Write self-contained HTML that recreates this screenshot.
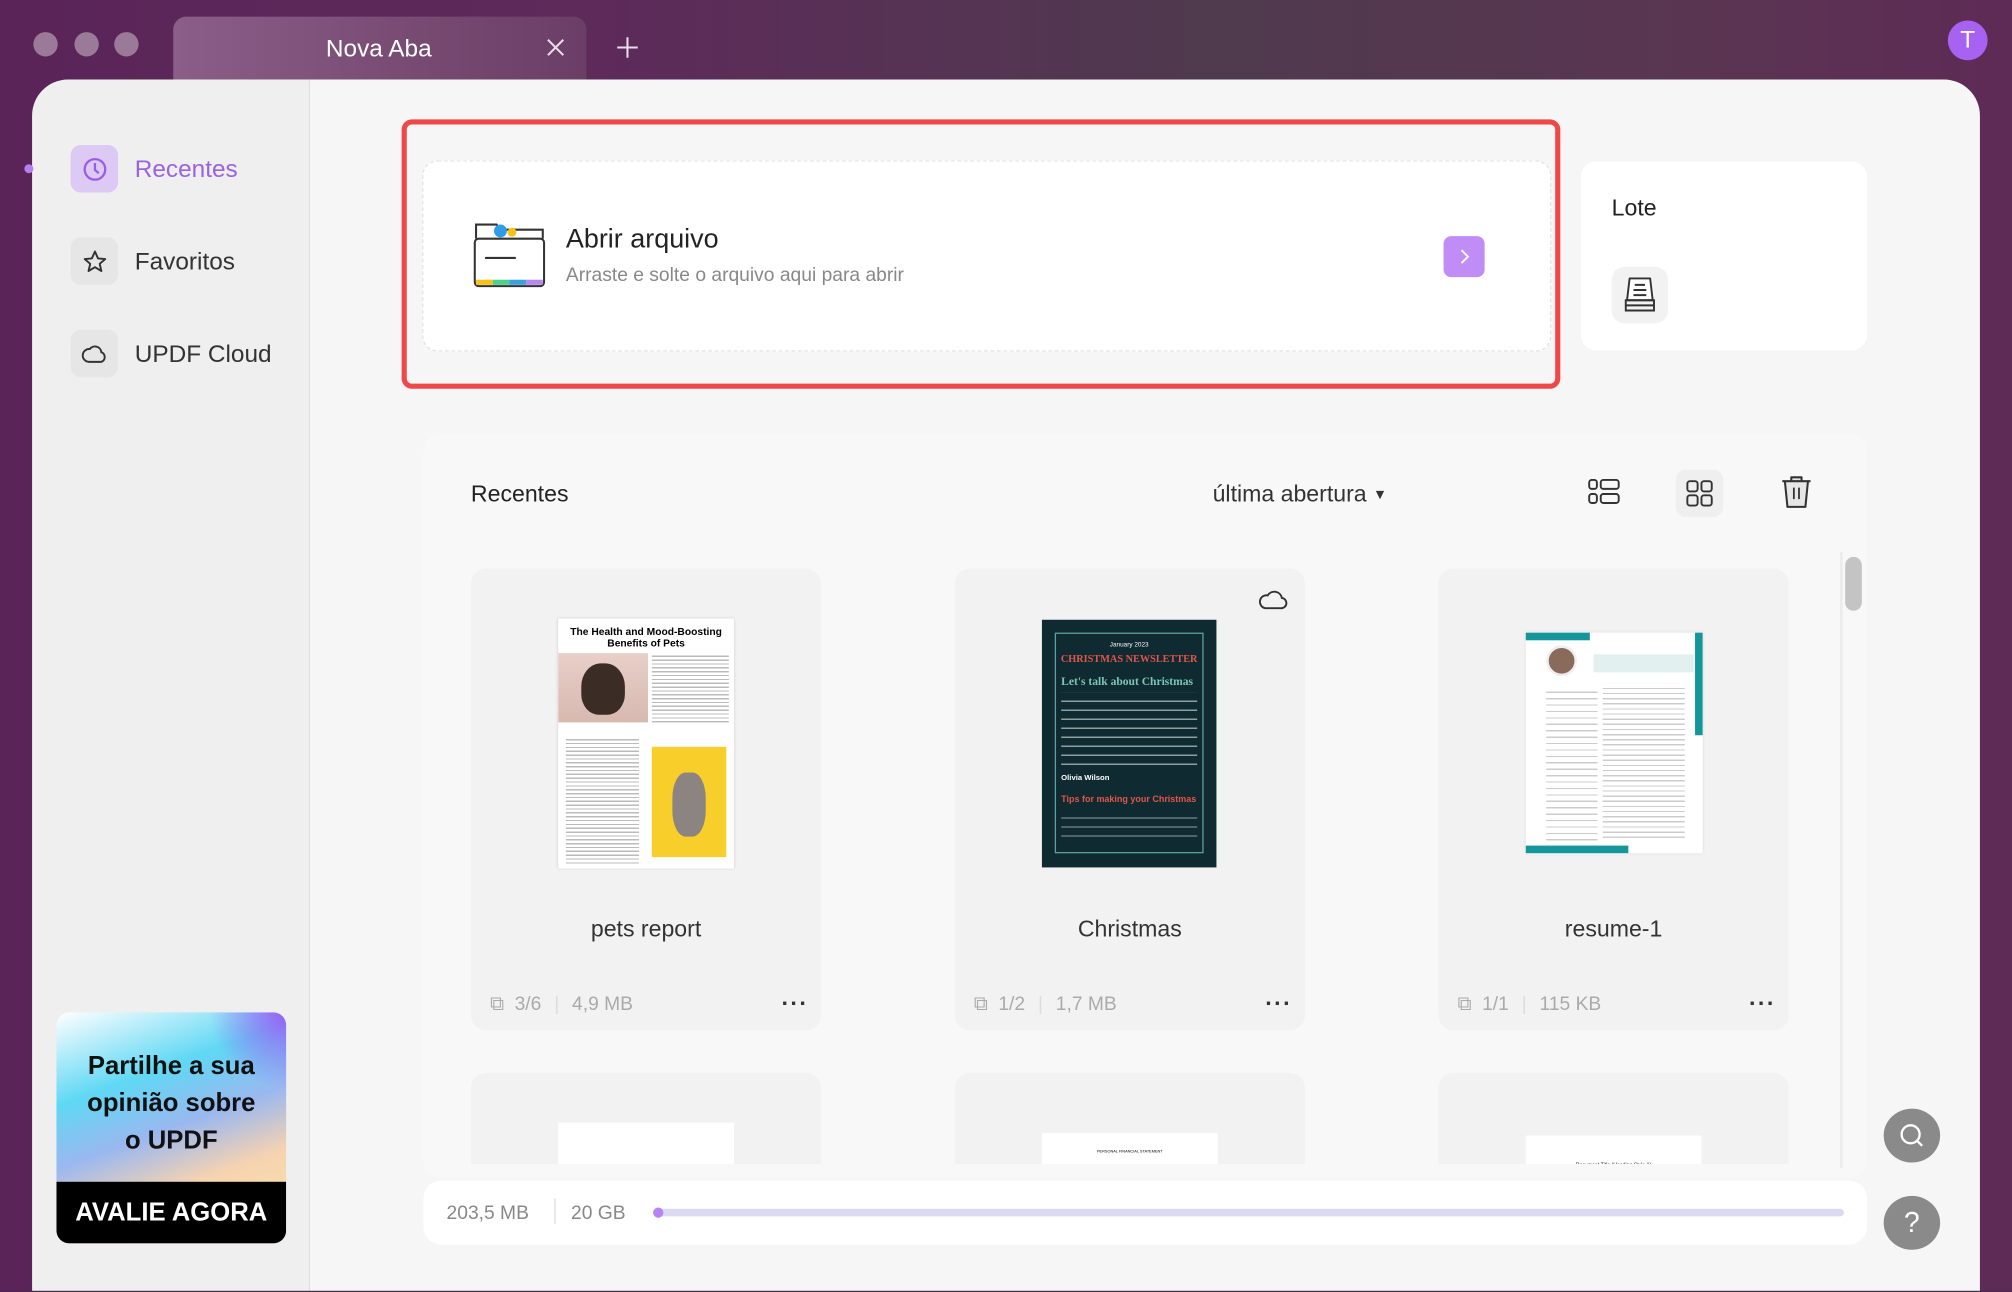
<!DOCTYPE html>
<html><head><meta charset="utf-8"><style>
*{box-sizing:border-box;margin:0;padding:0}
html,body{width:2012px;height:1292px;overflow:hidden;background:#4a2a4e}
#s{position:absolute;left:0;top:0;width:1568px;height:1006px;transform:scale(1.28316);transform-origin:0 0;font-family:"Liberation Sans",sans-serif;background:linear-gradient(90deg,#5a2458 0%,#5d2a5a 30%,#4f3a4e 60%,#5a3552 85%,#5e2a56 100%);overflow:hidden}
.a{position:absolute}
.tl{width:19px;height:19px;border-radius:50%;background:#9a7a98;top:25px}
.side{left:25px;top:62px;width:216px;height:944px;background:#efefef;border-radius:28px 0 0 0}
.main{left:241px;top:62px;width:1302px;height:944px;background:#f6f6f6;border-radius:0 28px 0 0}
.ib{width:37px;height:37px;border-radius:8px;background:#e6e6e6;display:flex;align-items:center;justify-content:center}
.sl{font-size:19px;color:#333}
.card{background:#f2f2f2;border-radius:12px;width:273px;height:360px}
.nm{font-size:18px;color:#333;width:273px;text-align:center}
.meta{font-size:15px;color:#aaa;display:flex;align-items:center}
.dots{font-size:18px;color:#333;letter-spacing:1px;font-weight:bold}
</style></head><body><div id="s">
<div class="a tl" style="left:26px"></div><div class="a tl" style="left:58px"></div><div class="a tl" style="left:89px"></div>
<div class="a" style="left:135px;top:13px;width:322px;height:52px;border-radius:10px 10px 0 0;background:linear-gradient(90deg,#8a5e88,#774a72 60%,#6a3e66)"></div>
<div class="a" style="left:254px;top:28px;font-size:19px;color:#fff">Nova Aba</div>
<svg class="a" style="left:426px;top:30px" width="14" height="14"><path d="M1 1L13 13M13 1L1 13" stroke="#e8dde8" stroke-width="1.6"/></svg>
<svg class="a" style="left:480px;top:28px" width="18" height="18"><path d="M9 1V17M1 9H17" stroke="#e8dde8" stroke-width="1.6"/></svg>
<div class="a" style="left:1518px;top:16px;width:31px;height:31px;border-radius:50%;background:#a862f2;color:#fff;font-size:19px;text-align:center;line-height:31px">T</div>

<div class="a side"></div><div class="a main"></div>
<div class="a" style="left:19px;top:128px;width:7px;height:7px;border-radius:50%;background:#b77ef0"></div>
<div class="a ib" style="left:55px;top:113px;background:#dccaf5"><svg width="20" height="20"><circle cx="10" cy="10" r="8" fill="none" stroke="#9b5de5" stroke-width="1.8"/><path d="M10 5V10.5L13 13" fill="none" stroke="#9b5de5" stroke-width="1.8"/></svg></div>
<div class="a sl" style="left:105px;top:122px;color:#9a63e0">Recentes</div>
<div class="a ib" style="left:55px;top:185px"><svg width="20" height="20"><path d="M10 2L12.4 7.4L18 7.9L13.7 11.6L15 17.2L10 14.2L5 17.2L6.3 11.6L2 7.9L7.6 7.4Z" fill="none" stroke="#333" stroke-width="1.5" stroke-linejoin="round"/></svg></div>
<div class="a sl" style="left:105px;top:194px">Favoritos</div>
<div class="a ib" style="left:55px;top:257px"><svg width="22" height="20"><path d="M6 16H16A4 4 0 0 0 16 8.5A5 5 0 0 0 7 6A4.5 4.5 0 0 0 6 16Z" fill="none" stroke="#333" stroke-width="1.5"/></svg></div>
<div class="a sl" style="left:105px;top:266px">UPDF Cloud</div>

<div class="a" style="left:44px;top:789px;width:179px;height:180px;border-radius:10px;overflow:hidden;background:linear-gradient(160deg,#fff 0%,#5fd8f4 30%,#9ab8f0 50%,#f6d3b0 70%,#fbe6a8 100%)">
<div class="a" style="right:0;top:0;width:60px;height:60px;background:radial-gradient(circle at 100% 0,#9a5ef5,transparent 70%)"></div>
<div class="a" style="left:0;top:28px;width:179px;text-align:center;font-weight:bold;font-size:20px;line-height:29px;color:#111">Partilhe a sua<br>opinião sobre<br>o UPDF</div>
<div class="a" style="left:0;top:132px;width:179px;height:48px;background:#000;color:#fff;font-weight:bold;font-size:20px;text-align:center;line-height:48px">AVALIE AGORA</div></div>

<div class="a" style="left:313px;top:93px;width:903px;height:210px;border:4px solid #ee4848;border-radius:8px"></div>
<div class="a" style="left:329px;top:125px;width:880px;height:149px;background:#fff;border:1px dashed #e4e4e4;border-radius:12px"></div>
<svg class="a" style="left:368px;top:170px" width="58" height="56"><path d="M3 16V5H19L22 9H55V16" fill="none" stroke="#333" stroke-width="1.6"/><circle cx="22" cy="10" r="5" fill="#2f9ce8"/><circle cx="31" cy="11" r="3.5" fill="#f6c21a"/><rect x="2" y="16" width="54" height="37" rx="3" fill="#fff" stroke="#333" stroke-width="1.6"/><path d="M10 31H34" stroke="#333" stroke-width="1.6"/><rect x="3" y="48" width="13" height="4" fill="#f6c21a"/><rect x="16" y="48" width="13" height="4" fill="#4cd08a"/><rect x="29" y="48" width="13" height="4" fill="#3aa0e0"/><rect x="42" y="48" width="13" height="4" fill="#b886f2"/></svg>
<div class="a" style="left:441px;top:175px;font-size:21px;color:#222">Abrir arquivo</div>
<div class="a" style="left:441px;top:206px;font-size:15px;color:#888">Arraste e solte o arquivo aqui para abrir</div>
<div class="a" style="left:1125px;top:184px;width:32px;height:32px;border-radius:6px;background:#c08cf5"><svg width="32" height="32"><path d="M14 11L19 16L14 21" fill="none" stroke="#fff" stroke-width="1.5"/></svg></div>
<div class="a" style="left:1232px;top:126px;width:223px;height:147px;background:#fff;border-radius:12px"></div>
<div class="a" style="left:1256px;top:152px;font-size:18px;color:#222">Lote</div>
<div class="a ib" style="left:1256px;top:208px;width:44px;height:44px;border-radius:10px;background:#f2f2f2"><svg width="30" height="32"><path d="M7 3H23L25 20H5Z" fill="#fff" stroke="#333" stroke-width="1.5" stroke-linejoin="round"/><path d="M11 8H19M10 12H20M10 16H20" stroke="#333" stroke-width="1.5"/><path d="M4 20H26V24H4ZM4 24H26V28H4Z" fill="none" stroke="#333" stroke-width="1.5"/></svg></div>

<div class="a" style="left:330px;top:338px;width:1125px;height:580px;background:#f8f8f8;border-radius:14px"></div>
<div class="a" style="left:367px;top:375px;font-size:18px;color:#222">Recentes</div>
<div class="a" style="left:945px;top:375px;font-size:18px;color:#333">última abertura <span style="font-size:11px;vertical-align:2px">▼</span></div>
<svg class="a" style="left:1237px;top:372px" width="26" height="22"><rect x="1.5" y="2" width="6" height="7" rx="2" fill="none" stroke="#333" stroke-width="1.5"/><rect x="10.5" y="2" width="14" height="7" rx="2" fill="none" stroke="#333" stroke-width="1.5"/><rect x="1.5" y="13" width="6" height="7" rx="2" fill="none" stroke="#333" stroke-width="1.5"/><rect x="10.5" y="13" width="14" height="7" rx="2" fill="none" stroke="#333" stroke-width="1.5"/></svg>
<div class="a" style="left:1306px;top:366px;width:37px;height:37px;border-radius:8px;background:#efefef"></div>
<svg class="a" style="left:1313px;top:373px" width="23" height="23"><rect x="2" y="2" width="8" height="8" rx="2" fill="none" stroke="#333" stroke-width="1.5"/><rect x="13" y="2" width="8" height="8" rx="2" fill="none" stroke="#333" stroke-width="1.5"/><rect x="2" y="13" width="8" height="8" rx="2" fill="none" stroke="#333" stroke-width="1.5"/><rect x="13" y="13" width="8" height="8" rx="2" fill="none" stroke="#333" stroke-width="1.5"/></svg>
<svg class="a" style="left:1387px;top:369px" width="26" height="28"><path d="M2 6H24M9 6V3H17V6M4 6L6 26H20L22 6" fill="#e6e6e6" stroke="#333" stroke-width="1.6" stroke-linejoin="round"/><path d="M11 11V20M15 11V20" stroke="#333" stroke-width="1.4"/></svg>

<div class="a" style="left:330px;top:420px;width:1100px;height:487px;overflow:hidden">
<div class="a card" style="left:37px;top:23px"></div><div class="a card" style="left:414px;top:23px"></div><div class="a card" style="left:791px;top:23px"></div>
<div class="a card" style="left:37px;top:416px"></div><div class="a card" style="left:414px;top:416px"></div><div class="a card" style="left:791px;top:416px"></div>
<div class="a" style="left:105px;top:455px;width:137px;height:60px;background:#fff"></div>
<div class="a" style="left:482px;top:463px;width:137px;height:60px;background:#fff;font-size:3px;text-align:center;padding-top:12px">PERSONAL FINANCIAL STATEMENT</div>
<div class="a" style="left:859px;top:465px;width:137px;height:60px;background:#fff;font-size:4px;text-align:center;padding-top:20px">Document Title (Heading Style 1)</div>
</div>
<div class="a" style="left:435px;top:482px;width:137px;height:195px;background:#fff;box-shadow:0 0 2px #ccc;overflow:hidden">
<div style="font-size:8px;font-weight:bold;text-align:center;margin-top:6px;line-height:9px">The Health and Mood-Boosting<br>Benefits of Pets</div>
<div class="a" style="left:0;top:27px;width:70px;height:54px;background:linear-gradient(#e8cfc8,#d7b9b0)"><div style="margin:8px auto;width:34px;height:40px;border-radius:45% 45% 40% 40%;background:#3b2c26"></div></div>
<div class="a" style="left:73px;top:27px;width:60px;height:54px;background:repeating-linear-gradient(#fff 0 2px,#bbb 2px 3px)"></div>
<div class="a" style="left:6px;top:92px;width:57px;height:100px;background:repeating-linear-gradient(#fff 0 2px,#bbb 2px 3px)"></div>
<div class="a" style="left:73px;top:100px;width:58px;height:86px;background:#f8cf2a"><div style="margin:20px auto;width:26px;height:50px;border-radius:40%;background:#8c8480"></div></div></div>
<div class="a" style="left:812px;top:483px;width:136px;height:193px;background:#0f2a30;overflow:hidden">
<div class="a" style="left:10px;top:10px;width:116px;height:172px;border:1px solid #5aa39a"></div>
<div style="color:#fff;font-size:5px;text-align:center;margin-top:17px">January 2023</div>
<div style="color:#e0564a;font-size:8px;font-weight:bold;text-align:center;margin-top:3px;font-family:'Liberation Serif',serif">CHRISTMAS NEWSLETTER</div>
<div style="color:#7cc6b6;font-size:9px;font-weight:bold;margin:8px 0 0 15px;font-family:'Liberation Serif',serif">Let's talk about Christmas</div>
<div style="margin:4px 15px;height:60px;background:repeating-linear-gradient(#0f2a30 0 6px,#8aa0a3 6px 7px)"></div>
<div style="color:#fff;font-size:6px;margin-left:15px;font-weight:bold">Olivia Wilson</div>
<div style="color:#e0564a;font-size:7px;font-weight:bold;margin:10px 0 0 15px">Tips for making your Christmas</div>
<div style="margin:4px 15px;height:26px;background:repeating-linear-gradient(#0f2a30 0 6px,#8aa0a3 6px 7px)"></div></div>
<div class="a" style="left:1189px;top:493px;width:138px;height:172px;background:#fff;box-shadow:0 0 2px #ddd;overflow:hidden">
<div class="a" style="left:0;top:0;width:50px;height:6px;background:#14969a"></div>
<div class="a" style="right:0;top:0;width:6px;height:80px;background:#14969a"></div>
<div class="a" style="left:0;bottom:0;width:80px;height:6px;background:#14969a"></div>
<div class="a" style="left:16px;top:10px;width:24px;height:24px;border-radius:50%;background:#8a6a5a;border:2px solid #eee"></div>
<div class="a" style="left:53px;top:17px;width:78px;height:14px;background:#e2f1f0"></div>
<div class="a" style="left:16px;top:42px;width:40px;height:120px;background:repeating-linear-gradient(#fff 0 4px,#ccc 4px 5px)"></div>
<div class="a" style="left:60px;top:40px;width:64px;height:120px;background:repeating-linear-gradient(#fff 0 3px,#ccc 3px 4px)"></div></div>

<div class="a nm" style="left:367px;top:714px">pets report</div>
<div class="a nm" style="left:744px;top:714px">Christmas</div>
<div class="a nm" style="left:1121px;top:714px">resume-1</div>
<div class="a meta" style="left:382px;top:774px">⧉&nbsp; 3/6 <span style="margin:0 10px;color:#ddd">|</span>4,9 MB</div>
<div class="a meta" style="left:759px;top:774px">⧉&nbsp; 1/2 <span style="margin:0 10px;color:#ddd">|</span>1,7 MB</div>
<div class="a meta" style="left:1136px;top:774px">⧉&nbsp; 1/1 <span style="margin:0 10px;color:#ddd">|</span>115 KB</div>
<div class="a dots" style="left:609px;top:772px">···</div><div class="a dots" style="left:986px;top:772px">···</div><div class="a dots" style="left:1363px;top:772px">···</div>
<svg class="a" style="left:980px;top:456px" width="25" height="22"><path d="M6 18H18A4 4 0 0 0 19 10A6 6 0 0 0 8 8A5 5 0 0 0 6 18Z" fill="none" stroke="#333" stroke-width="1.5"/></svg>
<div class="a" style="left:1434px;top:430px;width:2px;height:480px;background:#ececec"></div>
<div class="a" style="left:1438px;top:434px;width:13px;height:42px;border-radius:7px;background:#c4c4c4"></div>

<div class="a" style="left:330px;top:920px;width:1125px;height:50px;background:#fff;border-radius:14px"></div>
<div class="a" style="left:348px;top:937px;font-size:15px;color:#888">203,5 MB</div>
<div class="a" style="left:432px;top:934px;width:1px;height:20px;background:#ddd"></div>
<div class="a" style="left:445px;top:937px;font-size:15px;color:#888">20 GB</div>
<div class="a" style="left:510px;top:942px;width:927px;height:6px;border-radius:3px;background:#dcdaf0"></div>
<div class="a" style="left:509px;top:941px;width:8px;height:8px;border-radius:50%;background:#b884f0"></div>
<div class="a" style="left:1468px;top:864px;width:44px;height:42px;border-radius:50%;background:#8a8a8a"><svg width="44" height="42"><circle cx="21" cy="20" r="7" fill="none" stroke="#fff" stroke-width="1.8"/><path d="M26 25L30 29" stroke="#fff" stroke-width="1.8"/></svg></div>
<div class="a" style="left:1468px;top:932px;width:44px;height:42px;border-radius:50%;background:#8a8a8a;color:#fff;font-size:22px;text-align:center;line-height:42px">?</div>
</div></body></html>
